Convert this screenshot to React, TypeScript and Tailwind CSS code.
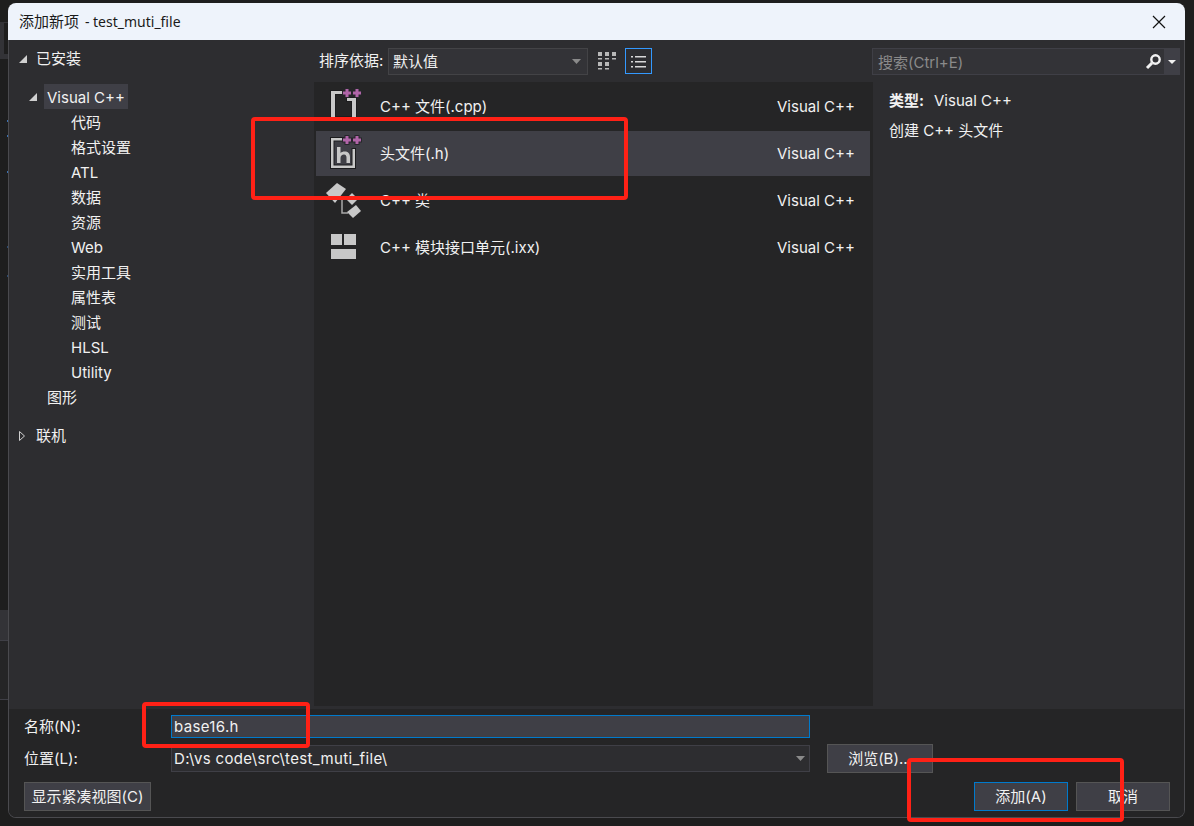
import { ReactNode } from "react";

const font = { fontFamily: 'Inter, "Noto Sans CJK SC", sans-serif' };
const titleFont = { fontFamily: '"Noto Sans", "Noto Sans CJK SC", sans-serif' };

const treeItems = ["代码", "格式设置", "ATL", "数据", "资源", "Web", "实用工具", "属性表", "测试", "HLSL", "Utility"];

function Open() {
  return (
    <svg width="10" height="10" viewBox="0 0 10 10" className="shrink-0">
      <path d="M9 1V9H1Z" fill="#d0d0d0" />
    </svg>
  );
}

function Closed() {
  return (
    <svg width="8" height="12" viewBox="0 0 8 12" className="shrink-0">
      <path d="M1.5 1.5L6.5 6L1.5 10.5Z" fill="none" stroke="#d0d0d0" />
    </svg>
  );
}

function Caret() {
  return (
    <svg width="9" height="5" viewBox="0 0 9 5">
      <path d="M0 0H9L4.5 5Z" fill="#8a8a8a" />
    </svg>
  );
}

function Plus({ x, y }: { x: number; y: number }) {
  return (
    <path
      d={`M${x - 1.5} ${y - 4}h3v2.500h2.500v3h-2.500v2.500h-3v-2.500h-2.500v-3h2.500z`}
      fill="#b065a8"
      stroke="#26262a"
      strokeWidth="2"
      paintOrder="stroke"
    />
  );
}

function CppIcon() {
  return (
    <svg width="38" height="38" viewBox="0 0 38 38">
      <path d="M5 3H16V6H9V29H26V13H21V10H30V32H5Z" fill="#c8c8c8" stroke="#1c1c1e" strokeWidth="2" paintOrder="stroke" />
      <Plus x={21} y={5} />
      <Plus x={31} y={5} />
    </svg>
  );
}

function HeaderIcon() {
  return (
    <svg width="38" height="38" viewBox="0 0 38 38">
      <path d="M5 3H17V5.500H7.500V30.500H26.500V14H29V33H5Z" fill="#c8c8c8" stroke="#1c1c1e" strokeWidth="2" paintOrder="stroke" />
      <path d="M11 12H14.500V18C15.500 17 17 16.500 18.500 16.500C22 16.500 24 18.500 24 22V28H20.500V22.500C20.500 20.500 19.500 19.500 18 19.500C16 19.500 14.500 21 14.500 23V28H11Z" fill="#c8c8c8" />
      <Plus x={21} y={5} />
      <Plus x={31} y={5} />
    </svg>
  );
}

function ClassIcon() {
  return (
    <svg width="38" height="40" viewBox="0 0 38 40">
      <path d="M11 2L20 8L9 22L0 12Z" fill="#c8c8c8" />
      <path d="M16 18V32H22" fill="none" stroke="#a8a8a8" strokeWidth="1.500" />
      <path d="M26 12L32 18L26 24L20 18Z" fill="#c8c8c8" />
      <path d="M30 24L35 30L27 37L21 31Z" fill="#c8c8c8" />
    </svg>
  );
}

function ModuleIcon() {
  return (
    <svg width="38" height="38" viewBox="0 0 38 38">
      <rect x="5" y="5" width="11" height="11" fill="#c8c8c8" />
      <rect x="18" y="5" width="12" height="11" fill="#c8c8c8" />
      <rect x="5" y="20" width="25" height="10" fill="#c8c8c8" />
    </svg>
  );
}

function Row({ icon, label, active }: { icon: ReactNode; label: string; active?: boolean }) {
  return (
    <div className={`flex h-[45px] items-center mb-[2px] ${active ? "bg-[#3f3f46]" : ""}`}>
      <div className="w-[64px] pl-[10px] flex items-center">{icon}</div>
      <span className="flex-1">{label}</span>
      <span className="w-[93px]">Visual C++</span>
    </div>
  );
}

function Btn({ children, primary, w }: { children: ReactNode; primary?: boolean; w: string }) {
  return (
    <div className={`h-[29px] flex items-center justify-center pt-[1px] bg-[#3f3f46] border ${primary ? "border-[#007acc]" : "border-[#555555]"} ${w}`}>
      {children}
    </div>
  );
}

function Mark({ cls }: { cls: string }) {
  return <div className={`absolute border-[4px] border-[#ff2116] rounded-[4px] ${cls}`} />;
}

export default function App() {
  return (
    <div className="relative w-[1194px] h-[826px] overflow-hidden bg-[#1e1e1e] pt-[3px] pl-[8px] text-[15px] leading-[20px] text-[#f1f1f1]" style={font}>
      {/* IDE behind the dialog */}
      <div className="absolute left-0 top-[22px] w-[8px] h-[37px] bg-[#333337]" />
      <div className="absolute left-[4px] top-[23px] w-[4px] h-[31px] bg-[#1e1e1e]" />
      <div className="absolute left-[7px] top-[120px] w-[2px] h-[2px] bg-[#3a70b0]" />
      <div className="absolute left-[7px] top-[135px] w-[2px] h-[2px] bg-[#3a70b0]" />
      <div className="absolute left-[7px] top-[171px] w-[2px] h-[2px] bg-[#3a70b0]" />
      <div className="absolute left-[7px] top-[246px] w-[2px] h-[2px] bg-[#2c4a70]" />
      <div className="absolute left-[7px] top-[275px] w-[2px] h-[2px] bg-[#2c4a70]" />
      <div className="absolute left-0 top-[610px] w-[8px] h-[30px] bg-[#333337]" />
      <div className="absolute left-0 top-[640px] w-[8px] h-[60px] bg-[#252526] border-y border-[#3f3f46]" />

      <div className="relative w-[1177px] h-[815px] flex flex-col">
        <div className="h-[37px] shrink-0 flex items-center justify-between bg-[#eef3fb] rounded-t-lg pl-[11px] pr-[19px] text-[#1a1a1a]" style={titleFont}>
          <span className="pb-[1px]">添加新项 <span className="ml-[2px] text-[14px]">- test_muti_file</span></span>
          <svg width="14" height="14" viewBox="0 0 14 14">
            <path d="M1 1L13 13M13 1L1 13" stroke="#111" strokeWidth="1.200" />
          </svg>
        </div>

        <div className="flex-1 flex flex-col border-x border-b border-[#4a4a4e] rounded-b-lg overflow-hidden min-h-0">
          <div className="h-[669px] shrink-0 flex bg-[#2d2d30]">
            <div className="w-[305px] shrink-0 pt-[1px]">
              <div className="flex items-center h-[20px] mt-[8px] pl-[9px] gap-[8px]">
                <Open />
                <span>已安装</span>
              </div>
              <div className="flex items-center h-[25px] mt-[15px] pl-[19px]">
                <Open />
                <span className="ml-[6px] h-[25px] pt-[2px] px-[3px] flex items-center bg-[#3f3f46]">Visual C++</span>
              </div>
              <div className="pl-[62px]">
                {treeItems.map((t) => (
                  <div key={t} className="h-[25px] pt-[2px] flex items-center">{t}</div>
                ))}
              </div>
              <div className="h-[25px] pt-[2px] flex items-center pl-[38px]">图形</div>
              <div className="flex items-center h-[25px] pt-[2px] mt-[13px] pl-[9px] gap-[10px]">
                <Closed />
                <span>联机</span>
              </div>
            </div>

            <div className="flex-1 flex flex-col min-w-0">
              <div className="h-[42px] shrink-0 flex items-center pl-[5px] pr-[4px]">
                <span className="w-[69px]">排序依据:</span>
                <div className="w-[200px] h-[27px] mt-[1px] flex items-center justify-between pl-[4px] pr-[6px] bg-[#333337] border border-[#434346]">
                  <span>默认值</span>
                  <Caret />
                </div>
                <svg width="18" height="18" viewBox="0 0 18 18" className="ml-[10px]">
                  <g fill="#b8b8b8">
                    <rect x="0" y="0" width="4" height="4" /><rect x="7" y="0" width="4" height="4" /><rect x="14" y="0" width="4" height="4" />
                    <rect x="0" y="6" width="4" height="1.500" /><rect x="7" y="6" width="4" height="1.500" /><rect x="14" y="6" width="4" height="1.500" />
                    <rect x="0" y="10" width="4" height="4" /><rect x="7" y="10" width="4" height="4" />
                    <rect x="0" y="16" width="4" height="1.500" /><rect x="7" y="16" width="4" height="1.500" />
                  </g>
                </svg>
                <div className="ml-[9px] w-[27px] h-[26px] flex items-center justify-center border border-[#3399ff]">
                  <svg width="15" height="13" viewBox="0 0 15 13">
                    <g fill="#d8d8d8">
                      <rect x="0" y="1" width="2" height="1.500" /><rect x="4" y="1" width="11" height="1.500" />
                      <rect x="0" y="6" width="2" height="1.500" /><rect x="4" y="6" width="11" height="1.500" />
                      <rect x="0" y="11" width="2" height="1.500" /><rect x="4" y="11" width="11" height="1.500" />
                    </g>
                  </svg>
                </div>
                <div className="ml-auto w-[308px] h-[27px] mt-[1px] flex items-center bg-[#333337] border border-[#3f3f46]">
                  <span className="flex-1 pl-[5px] pt-[2px] text-[#8a8a8a]">搜索(Ctrl+E)</span>
                  <svg width="17" height="18" viewBox="0 0 17 18" className="mr-[2px]">
                    <circle cx="10.500" cy="6.500" r="4.200" fill="none" stroke="#f1f1f1" strokeWidth="2.400" />
                    <path d="M7 10L2 15" stroke="#f1f1f1" strokeWidth="3" />
                  </svg>
                  <div className="w-[15px] h-full flex items-center justify-center bg-[#3f3f46]">
                    <svg width="8" height="4" viewBox="0 0 8 4"><path d="M0 0H8L4 4Z" fill="#f1f1f1" /></svg>
                  </div>
                </div>
              </div>

              <div className="flex-1 flex min-h-0">
                <div className="w-[559px] h-[624px] shrink-0 bg-[#252526] pt-[2px] pl-[2px] pr-[3px]">
                  <Row icon={<CppIcon />} label="C++ 文件(.cpp)" />
                  <Row icon={<HeaderIcon />} label="头文件(.h)" active />
                  <Row icon={<ClassIcon />} label="C++ 类" />
                  <Row icon={<ModuleIcon />} label="C++ 模块接口单元(.ixx)" />
                </div>
                <div className="flex-1 pl-[16px] pt-[9px]">
                  <div className="flex h-[20px] items-center">
                    <span className="font-bold">类型:</span>
                    <span className="ml-[10px]">Visual C++</span>
                  </div>
                  <div className="mt-[10px] h-[20px] flex items-center">创建 C++ 头文件</div>
                </div>
              </div>
            </div>
          </div>

          <div className="flex-1 bg-[#252526] pl-[15px] pr-[14px] min-h-0">
            <div className="flex items-center h-[23px] mt-[6px]">
              <span className="w-[147px] shrink-0">名称(N):</span>
              <div className="w-[639px] h-[23px] flex items-center pl-[2px] tracking-[0.35px] bg-[#3f3f46] border border-[#007acc]">base16.h</div>
            </div>
            <div className="flex items-center h-[29px] mt-[6px]">
              <span className="w-[147px] shrink-0">位置(L):</span>
              <div className="w-[639px] h-[27px] flex items-center justify-between pl-[2px] pr-[4px] bg-[#2d2d30] border border-[#3f3f46]">
                <span className="tracking-[0.35px]">D:\vs code\src\test_muti_file\</span>
                <Caret />
              </div>
              <div className="ml-[17px]"><Btn w="w-[106px]">浏览(B)...</Btn></div>
            </div>
            <div className="flex items-center mt-[9px]">
              <Btn w="w-[127px]">显示紧凑视图(C)</Btn>
              <div className="ml-auto flex gap-[8px]">
                <Btn primary w="w-[94px]">添加(A)</Btn>
                <Btn w="w-[94px]">取消</Btn>
              </div>
            </div>
          </div>
        </div>
      </div>

      {/* red annotations drawn on top of the screenshot */}
      <Mark cls="left-[251px] top-[117px] w-[377px] h-[83px]" />
      <Mark cls="left-[142px] top-[702px] w-[168px] h-[46px]" />
      <Mark cls="left-[907px] top-[758px] w-[217px] h-[64px]" />
    </div>
  );
}
